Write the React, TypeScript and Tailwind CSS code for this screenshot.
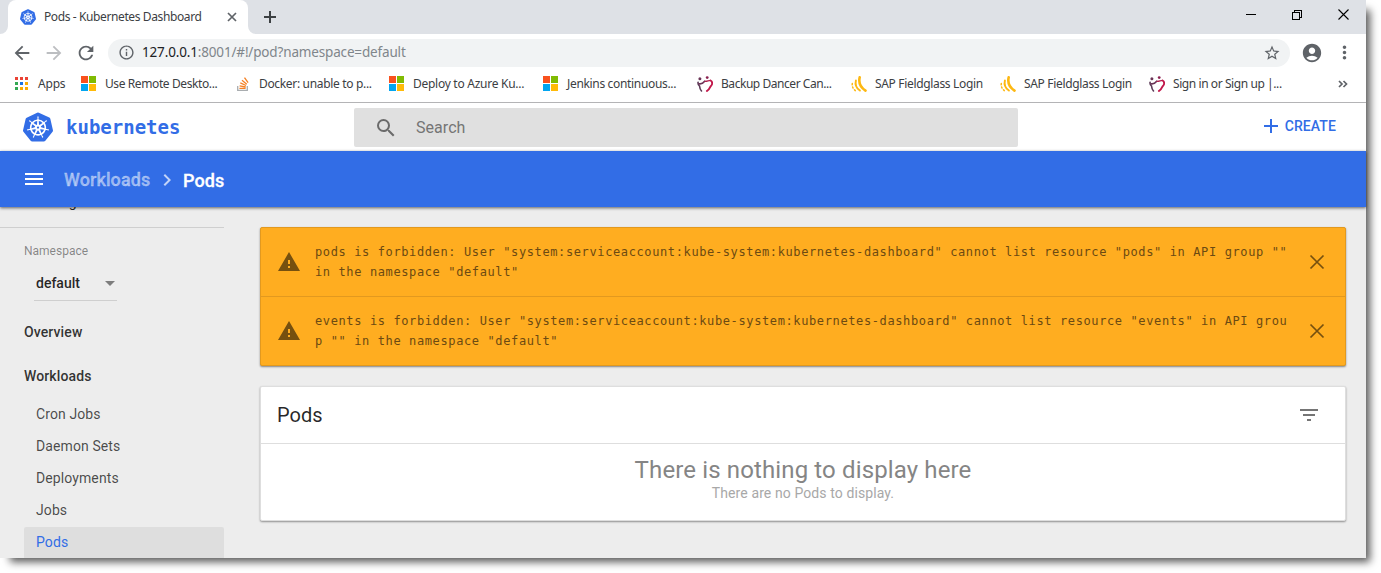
import type { ReactNode } from "react";
import {
  MdArrowBack,
  MdArrowForward,
  MdRefresh,
  MdInfoOutline,
  MdStarBorder,
  MdAccountCircle,
  MdMoreVert,
  MdSearch,
  MdAdd,
  MdMenu,
  MdChevronRight,
  MdWarning,
  MdFilterList,
  MdArrowDropDown,
} from "react-icons/md";
import { SiKubernetes } from "react-icons/si";

function AppsIcon() {
  const colors = ["#ea4335", "#ea4335", "#ea4335", "#34a853", "#1a73e8", "#fbab04", "#34a853", "#fbab04", "#fbab04"];
  return (
    <svg width="14" height="14" viewBox="0 0 14 14" shapeRendering="crispEdges">
      {colors.map((c, i) => (
        <rect key={i} x={(i % 3) * 5} y={Math.floor(i / 3) * 5} width="3" height="3" fill={c} />
      ))}
    </svg>
  );
}

function MicrosoftIcon() {
  return (
    <svg width="16" height="16" viewBox="0 0 16 16" shapeRendering="crispEdges">
      <rect x="0" y="0" width="7" height="7" fill="#f9511e" />
      <rect x="8" y="0" width="7" height="7" fill="#80bb03" />
      <rect x="0" y="8" width="7" height="7" fill="#02a5f0" />
      <rect x="8" y="8" width="7" height="7" fill="#ffba08" />
    </svg>
  );
}

function StackIcon() {
  return (
    <svg width="16" height="16" viewBox="0 0 16 16" fill="none">
      <path d="M2.700 10v4.400h9.600V10" stroke="#a9adb0" strokeWidth="1.300" />
      <g stroke="#f48024" strokeWidth="1.300">
        <path d="M4.400 12.400h6.200M4.600 9.800l6.100 1.200M5.300 6.900l5.700 2.600M7 4.200l4.800 4M9.500 1.600l3.600 5" />
      </g>
    </svg>
  );
}

function DancersIcon() {
  return (
    <svg width="16" height="16" viewBox="0.500 0 16 16" fill="none" strokeLinecap="round">
      <circle cx="3.400" cy="2.800" r="1.500" fill="#6b3557" />
      <circle cx="10.700" cy="1.600" r="1.400" fill="#8a2150" />
      <path d="M1.600 6.200c-.3 1.500.2 2.800 1.400 3.800 .2 2 .8 3.600 2 5" stroke="#5b3a57" strokeWidth="1.600" />
      <path d="M2.600 7.800c2 .4 4-.6 5.600-2.600" stroke="#6b3557" strokeWidth="1.700" />
      <path d="M8.600 5.400c2 .2 3.400-1 5.400-1" stroke="#b01f4e" strokeWidth="1.400" />
      <path d="M14 4.500c2.400 1.400 2.200 4-.2 6.300 -.8 1.800-1.800 3-3.400 4.200" stroke="#c2184b" strokeWidth="1.900" />
    </svg>
  );
}

function SapIcon() {
  return (
    <svg width="16" height="16" viewBox="0.500 0 16 16" fill="none" stroke="#fdb813" strokeLinecap="round">
      <path d="M9.200 1.300c-1.200 5 .8 10 5.800 13.300" strokeWidth="2.600" />
      <path d="M5.400 4.400c-1 4 .4 7.600 4 10.200" strokeWidth="1.900" />
      <path d="M1.800 7.600c-.4 2.800.7 5.200 3 7" strokeWidth="1.500" strokeDasharray="1.200 2.200" />
    </svg>
  );
}

function Bookmark({ icon, text, className }: { icon: ReactNode; text: string; className: string }) {
  return (
    <div className={`flex shrink-0 items-center gap-2 ${className}`}>
      <span className="flex w-4 shrink-0 justify-center">{icon}</span>
      <span className="whitespace-nowrap">{text}</span>
    </div>
  );
}

function TabStrip() {
  return (
    <div className="flex h-[34px] shrink-0 items-end bg-[#dee1e6]">
      <svg width="8" height="8" viewBox="0 0 8 8">
        <path d="M8 0v8H0a8 8 0 0 0 8-8z" fill="#fff" />
      </svg>
      <div className="flex h-[34px] w-[240px] items-center rounded-t-lg bg-white pl-[12px] pr-[10px]">
        <SiKubernetes className="h-4 w-4 text-[#326de6]" />
        <span className="ml-[8px] flex-1 whitespace-nowrap text-[12px] tracking-[-0.39px] text-[#3c4043]">
          Pods - Kubernetes Dashboard
        </span>
        <svg width="12" height="12" viewBox="0 0 12 12" stroke="#5f6368" strokeWidth="1.700">
          <path d="M2 2l8 8M10 2l-8 8" />
        </svg>
      </div>
      <svg width="8" height="8" viewBox="0 0 8 8">
        <path d="M0 0v8h8a8 8 0 0 1-8-8z" fill="#fff" />
      </svg>
      <svg className="mb-[11px] ml-[8px]" width="12" height="12" viewBox="0 0 12 12" stroke="#3c4043" strokeWidth="2">
        <path d="M6 0v12M0 6h12" />
      </svg>
      <div className="mb-[14px] ml-auto mr-[17px] flex items-center gap-[36px]">
        <svg width="10" height="11" viewBox="0 0 10 11" shapeRendering="crispEdges">
          <rect y="5" width="10" height="1" fill="#000" />
        </svg>
        <svg width="10" height="10" viewBox="0 0 10 10" fill="none" stroke="#000" shapeRendering="crispEdges">
          <path d="M.5 2.500h7v7h-7zM2.500 2.500v-2h7v7h-2" />
        </svg>
        <svg width="11" height="11" viewBox="0 0 11 11" stroke="#000" strokeWidth="1.100">
          <path d="M.5.5l10 10M10.500.5l-10 10" />
        </svg>
      </div>
    </div>
  );
}

function Toolbar() {
  return (
    <div className="flex h-[36px] shrink-0 items-center bg-white pl-[11px] pt-[1px] text-[#5f6368]">
      <MdArrowBack className="h-[22px] w-[22px]" />
      <MdArrowForward className="ml-[10px] h-[22px] w-[22px] text-[#bcbec1]" />
      <MdRefresh className="ml-[10px] h-[22px] w-[22px]" />
      <div className="ml-[11px] flex h-[28px] w-[1182px] items-center rounded-full bg-[#f1f3f4] pl-[10px] pr-[9px]">
        <MdInfoOutline className="h-[17px] w-[17px]" />
        <span className="ml-[7px] flex-1 whitespace-nowrap text-[13.500px] tracking-[-0.16px] text-[#80868b]">
          <span className="text-[#202124]">127.0.0.1</span>:8001/#!/pod?namespace=default
        </span>
        <MdStarBorder className="h-[18px] w-[18px]" />
      </div>
      <MdAccountCircle className="ml-[11px] h-[22px] w-[22px]" />
      <MdMoreVert className="ml-[11px] h-[21px] w-[21px]" />
    </div>
  );
}

function BookmarksBar() {
  return (
    <div className="flex h-[33px] shrink-0 items-center border-b border-[#b4b4b6] bg-white pb-[4px] pl-[14px] text-[12px] text-[#3c4043]">
      <Bookmark icon={<AppsIcon />} text="Apps" className="w-[67px] tracking-[-0.2px]" />
      <Bookmark icon={<MicrosoftIcon />} text="Use Remote Deskto..." className="w-[154px] tracking-[-0.4px]" />
      <Bookmark icon={<StackIcon />} text="Docker: unable to p..." className="w-[154px] tracking-[-0.33px]" />
      <Bookmark icon={<MicrosoftIcon />} text="Deploy to Azure Ku..." className="w-[154px] tracking-[-0.27px]" />
      <Bookmark icon={<MicrosoftIcon />} text="Jenkins continuous..." className="w-[154px] tracking-[-0.33px]" />
      <Bookmark icon={<DancersIcon />} text="Backup Dancer Can..." className="w-[154px] tracking-[-0.45px]" />
      <Bookmark icon={<SapIcon />} text="SAP Fieldglass Login" className="w-[149px] tracking-[-0.33px]" />
      <Bookmark icon={<SapIcon />} text="SAP Fieldglass Login" className="w-[149px] tracking-[-0.33px]" />
      <Bookmark icon={<DancersIcon />} text="Sign in or Sign up |..." className="w-[149px] tracking-[-0.42px]" />
      <svg className="ml-auto mr-[18px]" width="10" height="8" viewBox="0 0 10 8" fill="none" stroke="#5f6368" strokeWidth="1.700">
        <path d="M1 1l3 3-3 3M5.500 1l3 3-3 3" />
      </svg>
    </div>
  );
}

function AppHeader() {
  return (
    <div className="flex h-[48px] shrink-0 items-center bg-white pl-[23px]">
      <SiKubernetes className="h-[30px] w-[30px] text-[#326de6]" />
      <span className="ml-[13px] w-[288px] font-['DejaVu_Sans_Mono',monospace] text-[19px] font-bold text-[#326de6]">
        kubernetes
      </span>
      <div className="mt-px flex h-[39px] w-[664px] items-center rounded-[2px] bg-[#e0e0e0] pl-[20px]">
        <MdSearch className="h-[24px] w-[24px] text-[#6b6b6b]" />
        <span className="ml-[18px] text-[16px] tracking-[0.05px] text-[#757575]">Search</span>
      </div>
      <div className="-mt-[2px] ml-auto mr-[30px] flex items-center text-[#326de6]">
        <MdAdd className="h-[24px] w-[24px]" />
        <span className="ml-[2px] text-[14px] font-medium tracking-[0.1px]">CREATE</span>
      </div>
    </div>
  );
}

function Breadcrumbs() {
  return (
    <div className="relative z-10 flex h-[56px] shrink-0 items-center bg-[#326de6] pl-[22px] text-[18px] font-medium text-white shadow-[0_1px_3px_rgba(0,0,0,0.6)]">
      <MdMenu className="h-[24px] w-[24px]" />
      <span className="ml-[18px] w-[87px] tracking-[0.1px] text-white/50 [-webkit-text-stroke:0.3px]">Workloads</span>
      <MdChevronRight className="ml-[4px] mt-[2px] h-[24px] w-[24px] text-white/70" />
      <span className="ml-[4px] mt-[2px] tracking-[0.1px] [-webkit-text-stroke:0.3px]">Pods</span>
    </div>
  );
}

function Sidebar() {
  return (
    <div className="-mt-[16px] flex h-[367px] w-[224px] shrink-0 flex-col overflow-hidden text-[14px] text-black/70">
      <div className="mt-[3px] h-[33px] shrink-0 pl-[36px] leading-[16px] text-black/85">Storage Classes</div>
      <div className="h-px shrink-0 bg-[#cfcfcf]" />
      <div className="mt-[15px] h-[16px] shrink-0 pl-[24px] text-[12px] leading-[16px] text-black/45">Namespace</div>
      <div className="ml-[34px] mt-[8px] flex h-[34px] w-[83px] shrink-0 items-center border-b border-[#cfcfcf] pl-[2px]">
        <span className="flex-1 font-medium text-black/85">default</span>
        <MdArrowDropDown className="-mr-[5px] -mt-[2px] h-[24px] w-[24px] text-[#7d7d7d]" />
      </div>
      <div className="mt-[21px] h-[20px] shrink-0 pl-[24px] font-medium leading-[20px] tracking-[0.12px] text-black/80">Overview</div>
      <div className="mt-[24px] h-[20px] shrink-0 pl-[24px] font-medium leading-[20px] tracking-[0.12px] text-black/80">Workloads</div>
      <div className="ml-[24px] mt-[12px] flex shrink-0 flex-col leading-[32px] tracking-[0.1px]">
        <div className="h-8 pl-[12px]">Cron Jobs</div>
        <div className="h-8 pl-[12px]">Daemon Sets</div>
        <div className="h-8 pl-[12px]">Deployments</div>
        <div className="h-[33px] pl-[12px]">Jobs</div>
        <div className="h-8 rounded-[2px] bg-[#dedede] pl-[12px] leading-[30px] text-[#326de6]">Pods</div>
      </div>
    </div>
  );
}

function Alert({ lines, className }: { lines: string[]; className: string }) {
  return (
    <div className={`flex items-center pl-[16px] pr-[16px] ${className}`}>
      <MdWarning className="h-[24px] w-[24px] shrink-0 text-[#76500f]" />
      <div className="ml-[14px] flex-1 whitespace-pre font-['DejaVu_Sans_Mono',monospace] text-[12px] leading-[20px] tracking-[0.617px] text-[#6c4a12]">
        {lines.map((line) => (
          <div key={line}>{line}</div>
        ))}
      </div>
      <svg className="h-[24px] w-[24px] shrink-0" viewBox="0 0 24 24" stroke="#76500f" strokeWidth="1.700">
        <path d="M5.500 5.500l13 13M18.500 5.500l-13 13" />
      </svg>
    </div>
  );
}

function Content() {
  return (
    <div className="ml-[36px] mt-[20px] flex w-[1086px] shrink-0 flex-col">
      <div className="h-[139px] shrink-0 rounded-[2px] border border-[#e2991f] bg-[#ffad20] shadow-[0_1px_2px_rgba(0,0,0,0.45)]">
        <Alert
          className="h-[69px] border-b border-[#e2991f]"
          lines={[
            'pods is forbidden: User "system:serviceaccount:kube-system:kubernetes-dashboard" cannot list resource "pods" in API group ""',
            'in the namespace "default"',
          ]}
        />
        <Alert
          className="h-[68px]"
          lines={[
            'events is forbidden: User "system:serviceaccount:kube-system:kubernetes-dashboard" cannot list resource "events" in API grou',
            'p "" in the namespace "default"',
          ]}
        />
      </div>
      <div className="mt-[20px] flex h-[135px] shrink-0 flex-col rounded-[2px] border border-[#dedede] bg-white shadow-[0_1px_2px_rgba(0,0,0,0.4)]">
        <div className="flex h-[57px] shrink-0 items-center border-b border-[#dedede] pl-[16px] pr-[24px]">
          <span className="flex-1 text-[20px] text-black/85">Pods</span>
          <MdFilterList className="h-[24px] w-[24px] text-[#757575]" />
        </div>
        <div className="flex flex-col items-center pt-[10px]">
          <div className="text-[24px] leading-[32px] tracking-[0.13px] text-[#858585]">There is nothing to display here</div>
          <div className="-mt-px text-[14px] leading-[16px] tracking-[0.1px] text-[#a8a8a8]">There are no Pods to display.</div>
        </div>
      </div>
    </div>
  );
}

export default function App() {
  return (
    <div className="h-[573px] w-[1381px] overflow-hidden bg-white">
      <div className="flex h-[558px] w-[1366px] flex-col bg-[#ededed] shadow-[7px_7px_8px_-3px_rgba(0,0,0,0.65)]">
        <div className="flex flex-col font-['Noto_Sans',sans-serif]">
          <TabStrip />
          <Toolbar />
          <BookmarksBar />
        </div>
        <div className="flex flex-col font-[Roboto,sans-serif]">
          <AppHeader />
          <Breadcrumbs />
          <div className="flex h-[351px] overflow-hidden">
            <Sidebar />
            <Content />
          </div>
        </div>
      </div>
    </div>
  );
}
